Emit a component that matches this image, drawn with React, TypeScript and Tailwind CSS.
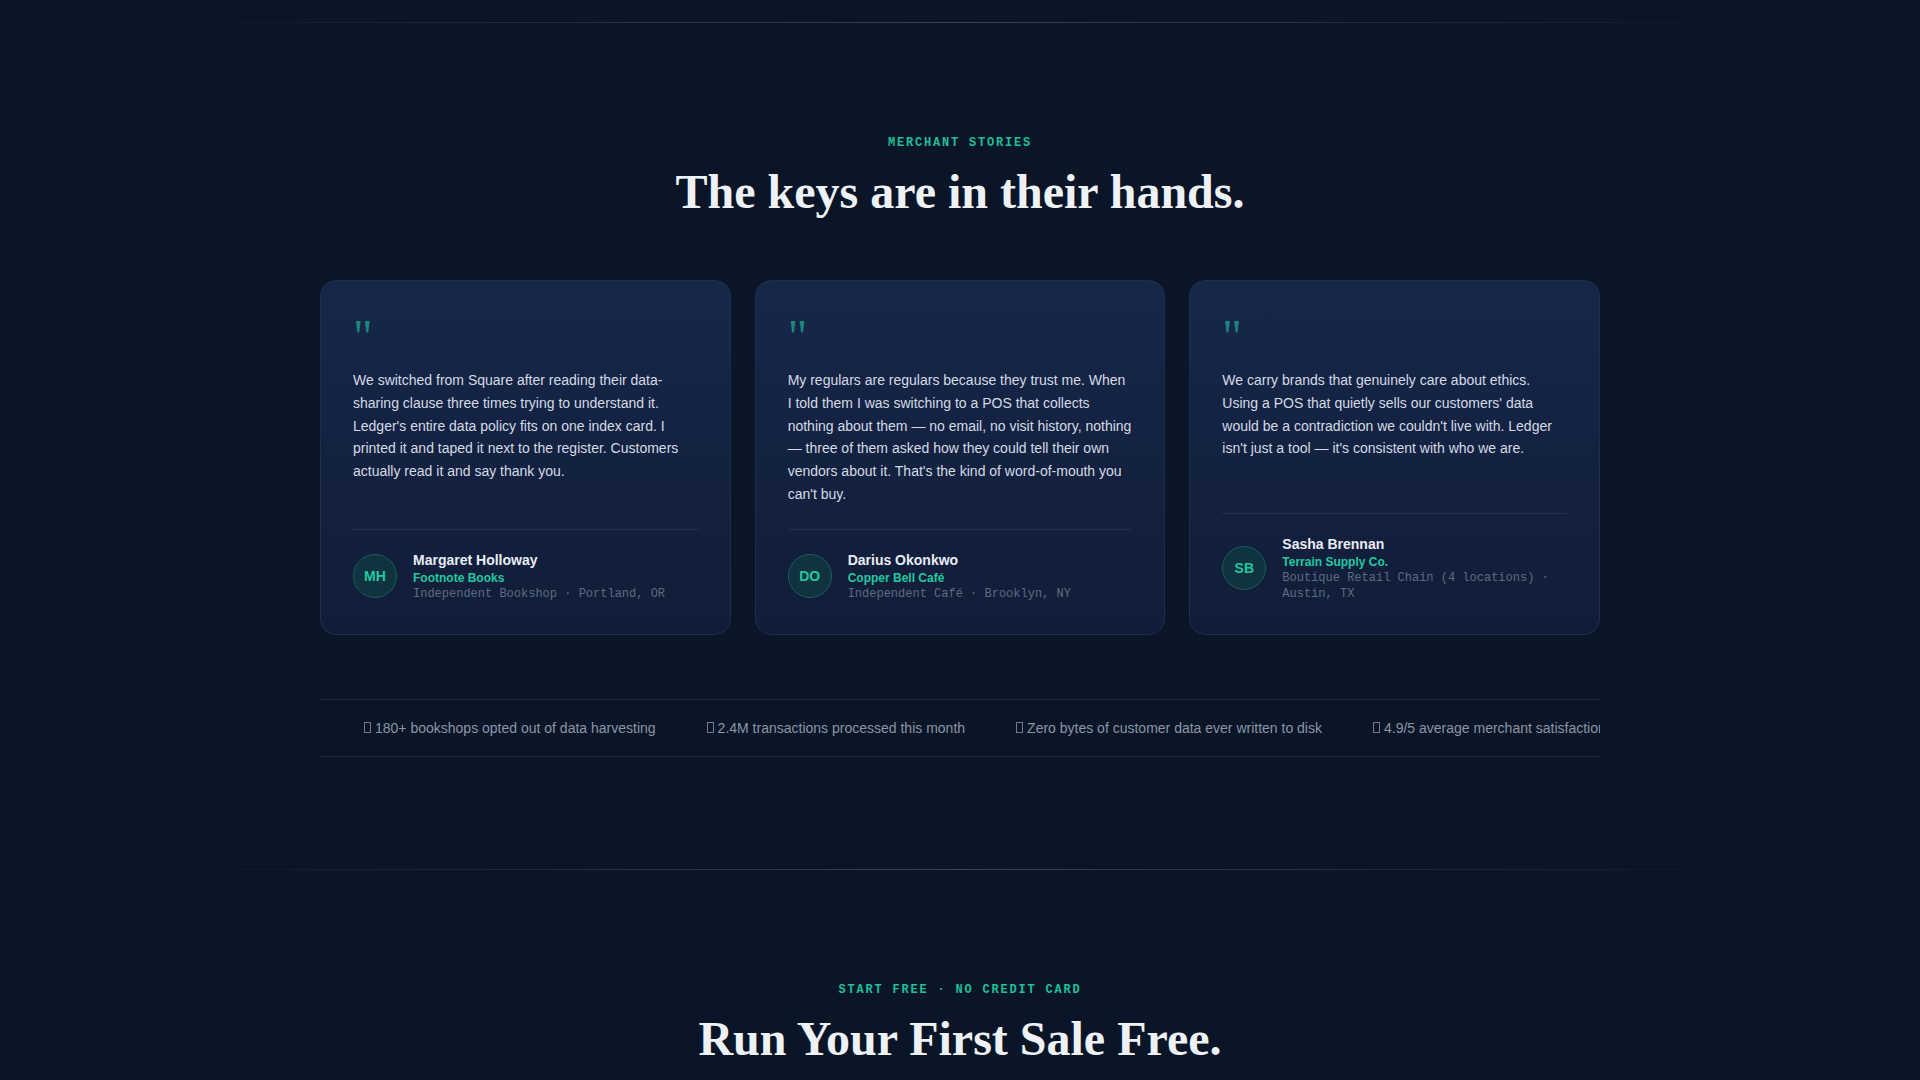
const stories = [
  {
    quote:
      "We switched from Square after reading their data-sharing clause three times trying to understand it. Ledger's entire data policy fits on one index card. I printed it and taped it next to the register. Customers actually read it and say thank you.",
    initials: "MH",
    name: "Margaret Holloway",
    business: "Footnote Books",
    meta: "Independent Bookshop · Portland, OR",
  },
  {
    quote:
      "My regulars are regulars because they trust me. When I told them I was switching to a POS that collects nothing about them — no email, no visit history, nothing — three of them asked how they could tell their own vendors about it. That's the kind of word-of-mouth you can't buy.",
    initials: "DO",
    name: "Darius Okonkwo",
    business: "Copper Bell Café",
    meta: "Independent Café · Brooklyn, NY",
  },
  {
    quote:
      "We carry brands that genuinely care about ethics. Using a POS that quietly sells our customers' data would be a contradiction we couldn't live with. Ledger isn't just a tool — it's consistent with who we are.",
    initials: "SB",
    name: "Sasha Brennan",
    business: "Terrain Supply Co.",
    meta: "Boutique Retail Chain (4 locations) · Austin, TX",
  },
];

const stats = [
  "180+ bookshops opted out of data harvesting",
  "2.4M transactions processed this month",
  "Zero bytes of customer data ever written to disk",
  "4.9/5 average merchant satisfaction",
];

function Divider() {
  return (
    <div className="mx-auto h-px w-full max-w-[1600px] bg-linear-to-r from-transparent via-[#34445f] to-transparent" />
  );
}

function Eyebrow({ children }: { children: React.ReactNode }) {
  return (
    <p className="mb-[17px] text-center font-['Liberation_Mono',monospace] text-xs leading-4 font-bold tracking-[0.15em] text-[#1fbf99] uppercase">
      {children}
    </p>
  );
}

function StoryCard({ story }: { story: (typeof stories)[number] }) {
  return (
    <article className="flex flex-col rounded-2xl border border-[#1f2e4d] bg-linear-to-b from-[#16274a] to-[#111d38] p-8">
      <span className="mb-2 h-12 font-['Liberation_Serif',serif] text-5xl leading-none text-[#22c9a0]/60">
        &quot;
      </span>
      <p className="text-sm leading-[1.625] text-[#d5dbe5]">{story.quote}</p>

      <div className="mt-auto pt-[23px]">
        <div className="flex items-center gap-4 border-t border-[#22314f] pt-5">
          <div className="flex h-11 w-11 shrink-0 items-center justify-center rounded-full border border-[#1b5d5c] bg-[#0f3440] text-sm font-bold text-[#22c9a0]">
            {story.initials}
          </div>
          <div className="min-w-0">
            <p className="text-sm leading-5 font-bold text-[#e8edf5]">{story.name}</p>
            <p className="text-xs leading-4 font-bold text-[#22c9a0]">{story.business}</p>
            <p className="font-['Liberation_Mono',monospace] text-xs leading-4 text-[#5d6b80]">
              {story.meta}
            </p>
          </div>
        </div>
      </div>
    </article>
  );
}

export default function App() {
  return (
    <div className="min-h-screen bg-[#0a1628] font-['Liberation_Sans',Arial,sans-serif]">
      <div className="h-[22px]" />
      <Divider />

      {/* merchant stories */}
      <section className="px-8 pt-28 pb-28">
        <div className="mx-auto max-w-7xl">
          <Eyebrow>Merchant Stories</Eyebrow>
          <h2 className="text-center font-['Liberation_Serif',serif] text-5xl leading-none font-bold text-[#eef2f7]">
            The keys are in their hands.
          </h2>

          <div className="mt-16 grid grid-cols-3 gap-6">
            {stories.map((s) => (
              <StoryCard key={s.initials} story={s} />
            ))}
          </div>

          {/* proof ticker, clipped at the container edge */}
          <div className="mt-16 overflow-hidden border-y border-[#1e2b44] py-[18px]">
            <div className="flex gap-[51px] pl-11 text-sm leading-5 whitespace-nowrap text-[#8b95a7]">
              {stats.map((s) => (
                <span key={s} className="flex items-center">
                  <span className="mr-1 inline-block h-[11px] w-[7px] border border-[#6f7a8c]" />
                  {s}
                </span>
              ))}
            </div>
          </div>
        </div>
      </section>

      <Divider />

      {/* call to action */}
      <section className="px-8 pt-28 pb-28">
        <Eyebrow>Start free · No credit card</Eyebrow>
        <h2 className="text-center font-['Liberation_Serif',serif] text-5xl leading-none font-bold text-[#eef2f7]">
          Run Your First Sale Free.
        </h2>
      </section>
    </div>
  );
}
